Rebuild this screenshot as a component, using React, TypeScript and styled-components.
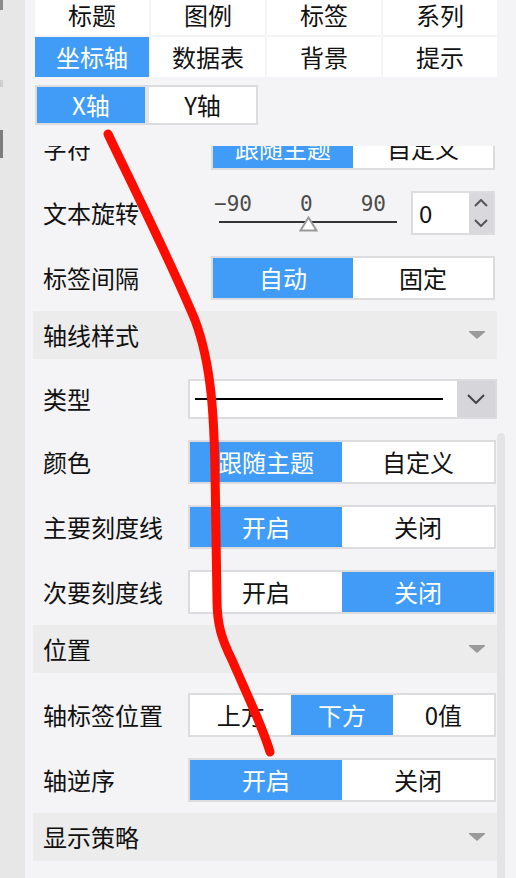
import React from "react";
import styled, { createGlobalStyle } from "styled-components";

const BLUE = "#419cf7";
const BORDER = "#dcdcdf";
const CJK = `"Noto Sans CJK SC", "Noto Sans", sans-serif`;

const GlobalStyle = createGlobalStyle`
  html, body { margin: 0; padding: 0; background: #f4f4f6; }
  body { font-family: ${CJK}; overflow: hidden; }
  * { box-sizing: border-box; }
`;

const Screen = styled.div`
  position: relative;
  display: flex;
  width: 516px;
  height: 878px;
  overflow: hidden;
  background: #f4f4f6;
`;

const LeftRail = styled.div`
  flex: 0 0 25px;
  display: flex;
  flex-direction: column;
  background: #e7e7e8;
`;

const RailMark = styled.div<{ $top: number; $h: number; $c: string }>`
  width: 3px;
  height: ${(p) => p.$h}px;
  margin-top: ${(p) => p.$top}px;
  background: ${(p) => p.$c};
`;

const Panel = styled.div`
  flex: 1;
  display: flex;
  flex-direction: column;
  padding-left: 8px;
  min-width: 0;
`;

const TabGrid = styled.div`
  display: grid;
  grid-template-columns: repeat(4, 114px);
  grid-auto-rows: 40px;
  gap: 2px;
  margin: -5px 0 0 2px;
  width: 462px;
`;

const Tab = styled.div<{ $active?: boolean }>`
  display: flex;
  align-items: center;
  justify-content: center;
  background: ${(p) => (p.$active ? BLUE : "#ffffff")};
  color: ${(p) => (p.$active ? "#ffffff" : "#111111")};
  font-size: 24px;
  line-height: 1;
`;

const SubTabs = styled.div`
  display: grid;
  grid-template-columns: 108px 107px;
  gap: 4px;
  margin: 8px 0 0 2px;
  width: 223px;
  height: 40px;
  border: 2px solid ${BORDER};
  background: #e2e2e4;
`;

const ScrollArea = styled.div`
  flex: 1;
  display: flex;
  margin-top: 21px;
  min-height: 0;
  overflow: hidden;
`;

const Content = styled.div`
  flex: 0 0 464px;
  align-self: flex-start;
  display: flex;
  flex-direction: column;
  margin-top: -30px;
`;

const ScrollTrack = styled.div`
  flex: 0 0 8px;
  display: flex;
  flex-direction: column;
`;

const ScrollThumb = styled.div`
  margin-top: 287px;
  height: 700px;
  background: #e4e4e6;
  border-radius: 4px 4px 0 0;
`;

const Row = styled.div`
  display: flex;
  align-items: center;
  padding: 10px 0 11px;
`;

const Label = styled.div<{ $w: number }>`
  flex: 0 0 ${(p) => p.$w}px;
  padding-left: 10px;
  font-size: 24px;
  line-height: 1;
  color: #111111;
  white-space: nowrap;
`;

const Segmented = styled.div<{ $w: number }>`
  display: flex;
  width: ${(p) => p.$w}px;
  height: 44px;
  border: 2px solid ${BORDER};
  background: #ffffff;
`;

const Seg = styled.div<{ $active?: boolean }>`
  flex: 1;
  display: flex;
  align-items: center;
  justify-content: center;
  background: ${(p) => (p.$active ? BLUE : "#ffffff")};
  color: ${(p) => (p.$active ? "#ffffff" : "#111111")};
  font-size: 24px;
  line-height: 1;
  white-space: nowrap;
`;

const Header = styled.div`
  display: flex;
  align-items: center;
  justify-content: space-between;
  height: 48px;
  margin-bottom: 10px;
  padding: 0 12px 0 10px;
  background: #ececec;
  font-size: 24px;
  line-height: 1;
  color: #111111;
`;

const SliderBox = styled.div`
  display: flex;
  flex-direction: column;
  width: 186px;
  padding-left: 3px;
  margin-right: 14px;
`;

const SliderLabels = styled.div`
  display: flex;
  justify-content: space-between;
  padding-right: 11px;
  height: 20px;
  font-family: "DejaVu Sans Mono", monospace;
  font-size: 21px;
  line-height: 20px;
  color: #4c4c4c;
`;

const SliderTrack = styled.div`
  position: relative;
  height: 18px;
  margin-left: 5px;
`;

const SliderLine = styled.div`
  position: absolute;
  left: 0;
  right: 0;
  top: 7px;
  height: 2px;
  background: #333333;
`;

const SliderThumb = styled.svg`
  position: absolute;
  left: 80px;
  top: 2px;
`;

const NumberBox = styled.div`
  display: flex;
  width: 84px;
  height: 44px;
  border: 2px solid ${BORDER};
  background: #ffffff;
`;

const NumberField = styled.div`
  flex: 1;
  display: flex;
  align-items: center;
  padding-left: 6px;
  font-size: 24px;
  line-height: 1;
  color: #111111;
`;

const Spinner = styled.div`
  flex: 0 0 24px;
  display: flex;
  flex-direction: column;
  align-items: center;
  justify-content: space-around;
  background: #d9d9dd;
`;

const SelectBox = styled.div`
  display: flex;
  width: 309px;
  height: 40px;
  border: 2px solid ${BORDER};
  background: #ffffff;
`;

const SelectBody = styled.div`
  flex: 1;
  display: flex;
  align-items: center;
  padding: 0 14px 0 5px;
`;

const LineSample = styled.div`
  flex: 1;
  height: 2px;
  background: #000000;
`;

const SelectButton = styled.div`
  flex: 0 0 38px;
  display: flex;
  align-items: center;
  justify-content: center;
  background: #d6d6da;
`;

const Overlay = styled.svg`
  position: absolute;
  left: 0;
  top: 0;
  pointer-events: none;
`;

const Caret = () => (
  <svg width="16" height="8" viewBox="0 0 16 8">
    <path d="M0 0 H16 V1 L8 8 L0 1 Z" fill="#9a9a9a" />
  </svg>
);

const Chevron = ({ up, w = 14, h = 8, color = "#555" }: { up?: boolean; w?: number; h?: number; color?: string }) => (
  <svg width={w} height={h} viewBox={`0 0 ${w} ${h}`}>
    <path
      d={up ? `M1 ${h - 1} L${w / 2} 1 L${w - 1} ${h - 1}` : `M1 1 L${w / 2} ${h - 1} L${w - 1} 1`}
      fill="none"
      stroke={color}
      strokeWidth="2"
    />
  </svg>
);

type SegItem = { text: string; active?: boolean };

const SegRow = ({ label, labelW, width, items }: { label: string; labelW: number; width: number; items: SegItem[] }) => (
  <Row>
    <Label $w={labelW}>{label}</Label>
    <Segmented $w={width}>
      {items.map((it) => (
        <Seg key={it.text} $active={it.active}>
          {it.text}
        </Seg>
      ))}
    </Segmented>
  </Row>
);

const SectionHeader = ({ title }: { title: string }) => (
  <Header>
    <span>{title}</span>
    <Caret />
  </Header>
);

const tabs: SegItem[] = [
  { text: "标题" },
  { text: "图例" },
  { text: "标签" },
  { text: "系列" },
  { text: "坐标轴", active: true },
  { text: "数据表" },
  { text: "背景" },
  { text: "提示" },
];

export default function App() {
  return (
    <>
      <GlobalStyle />
      <Screen>
        <LeftRail>
          <RailMark $top={0} $h={10} $c="#8a8a8a" />
          <RailMark $top={70} $h={7} $c="#d0d0d0" />
          <RailMark $top={43} $h={28} $c="#7d7d7d" />
        </LeftRail>
        <Panel>
          <TabGrid>
            {tabs.map((t) => (
              <Tab key={t.text} $active={t.active}>
                {t.text}
              </Tab>
            ))}
          </TabGrid>
          <SubTabs>
            <Tab $active>X轴</Tab>
            <Tab>Y轴</Tab>
          </SubTabs>
          <ScrollArea>
            <Content>
              <SegRow
                label="字符"
                labelW={178}
                width={284}
                items={[{ text: "跟随主题", active: true }, { text: "自定义" }]}
              />
              <Row>
                <Label $w={178}>文本旋转</Label>
                <SliderBox>
                  <SliderLabels>
                    <span>−90</span>
                    <span>0</span>
                    <span>90</span>
                  </SliderLabels>
                  <SliderTrack>
                    <SliderLine />
                    <SliderThumb width="19" height="16" viewBox="0 0 19 16">
                      <path d="M9.5 1.5 L17.5 14.5 H1.5 Z" fill="#ffffff" stroke="#9a9a9a" strokeWidth="2" />
                    </SliderThumb>
                  </SliderTrack>
                </SliderBox>
                <NumberBox>
                  <NumberField>0</NumberField>
                  <Spinner>
                    <Chevron up />
                    <Chevron />
                  </Spinner>
                </NumberBox>
              </Row>
              <SegRow
                label="标签间隔"
                labelW={178}
                width={284}
                items={[{ text: "自动", active: true }, { text: "固定" }]}
              />
              <SectionHeader title="轴线样式" />
              <Row>
                <Label $w={155}>类型</Label>
                <SelectBox>
                  <SelectBody>
                    <LineSample />
                  </SelectBody>
                  <SelectButton>
                    <Chevron w={18} h={10} color="#444" />
                  </SelectButton>
                </SelectBox>
              </Row>
              <SegRow
                label="颜色"
                labelW={155}
                width={308}
                items={[{ text: "跟随主题", active: true }, { text: "自定义" }]}
              />
              <SegRow
                label="主要刻度线"
                labelW={155}
                width={308}
                items={[{ text: "开启", active: true }, { text: "关闭" }]}
              />
              <SegRow
                label="次要刻度线"
                labelW={155}
                width={308}
                items={[{ text: "开启" }, { text: "关闭", active: true }]}
              />
              <SectionHeader title="位置" />
              <SegRow
                label="轴标签位置"
                labelW={155}
                width={308}
                items={[{ text: "上方" }, { text: "下方", active: true }, { text: "0值" }]}
              />
              <SegRow
                label="轴逆序"
                labelW={155}
                width={308}
                items={[{ text: "开启", active: true }, { text: "关闭" }]}
              />
              <SectionHeader title="显示策略" />
            </Content>
            <ScrollTrack>
              <ScrollThumb />
            </ScrollTrack>
          </ScrollArea>
        </Panel>
        <Overlay width="516" height="878" viewBox="0 0 516 878">
          <path
            d="M108 134 C125 170 170 260 195 320 C212 365 214 420 215 470 L217 600 C217 625 222 640 232 660 C245 690 262 725 270 752"
            fill="none"
            stroke="#fb0d00"
            strokeWidth="9"
            strokeLinecap="round"
            strokeLinejoin="round"
          />
        </Overlay>
      </Screen>
    </>
  );
}
